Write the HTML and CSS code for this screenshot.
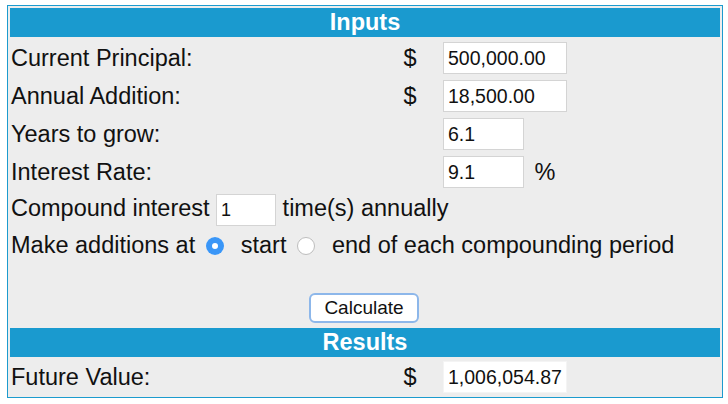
FILE: index.html
```html
<!DOCTYPE html>
<html lang="en">
<head>
    <meta charset="UTF-8">
    <meta name="viewport" content="width=device-width, initial-scale=1.0">
    <title>Compound Interest Calculator</title>
    <link rel="stylesheet" href="styles.css">
</head>
<body>
    <form class="calc">
        <table class="calc-table">
            <colgroup>
                <col class="col-label">
                <col class="col-sign">
                <col class="col-field">
            </colgroup>
            <tr>
                <th colspan="3" class="section-head">Inputs</th>
            </tr>
            <tr>
                <td class="first">Current Principal:</td>
                <td class="sign first">$</td>
                <td class="field first"><input type="text" class="wide" value="500,000.00"></td>
            </tr>
            <tr>
                <td>Annual Addition:</td>
                <td class="sign">$</td>
                <td class="field"><input type="text" class="wide" value="18,500.00"></td>
            </tr>
            <tr>
                <td>Years to grow:</td>
                <td class="sign"></td>
                <td class="field"><input type="text" class="short" value="6.1"></td>
            </tr>
            <tr>
                <td>Interest Rate:</td>
                <td class="sign"></td>
                <td class="field"><input type="text" class="short" value="9.1"> <span class="pct">%</span></td>
            </tr>
            <tr>
                <td colspan="3">Compound interest <input type="text" class="tiny" value="1"> time(s) annually</td>
            </tr>
            <tr>
                <td colspan="3" class="radio-row">Make additions at <input type="radio" name="when" class="radio" checked>start <input type="radio" name="when" class="radio">end of each compounding period</td>
            </tr>
            <tr>
                <td colspan="3" class="submit-row"><button type="button" class="calc-btn">Calculate</button></td>
            </tr>
            <tr>
                <th colspan="3" class="section-head">Results</th>
            </tr>
            <tr>
                <td>Future Value:</td>
                <td class="sign">$</td>
                <td class="field"><input type="text" class="wide result" value="1,006,054.87" readonly></td>
            </tr>
        </table>
    </form>
</body>
</html>
```

FILE: styles.css
```css
body {
    margin: 0;
    background-color: #fff;
    font-family: "Liberation Sans", Arial, sans-serif;
    color: #111;
}
.calc {
    padding: 5px 0 0 7px;
}
.calc-table {
    width: 716px;
    table-layout: fixed;
    border: 1px solid #1c9bce;
    border-spacing: 2px;
    background-color: #ededed;
    font-size: 23.5px;
}
.col-label {
    width: 369px;
}
.col-sign {
    width: 58px;
}
.calc-table td {
    padding: 2px 1px;
    white-space: nowrap;
}
.calc-table td.first {
    padding-top: 3px;
}
.section-head {
    height: 29px;
    padding: 0;
    background-color: #1a9acf;
    color: #fff;
    font-weight: bold;
    text-align: center;
    line-height: 29px;
}
.sign {
    text-align: center;
}
.calc-table td.field {
    padding-left: 2px;
}
input[type="text"] {
    height: 32px;
    box-sizing: border-box;
    padding: 0 0 0 4px;
    border: 1px solid #d4d4d4;
    background-color: #fff;
    font-family: "Liberation Sans", Arial, sans-serif;
    font-size: 19.5px;
    color: #111;
    vertical-align: middle;
    margin: 0;
}
.wide {
    width: 124px;
}
.short {
    width: 81px;
}
input[type="text"].tiny {
    width: 60px;
    font-size: 18px;
}
input[type="text"].result {
    border-color: #f4f4f4;
}
.pct {
    margin-left: 4px;
    vertical-align: middle;
}
input[type="radio"].radio {
    appearance: none;
    -webkit-appearance: none;
    display: inline-block;
    box-sizing: border-box;
    width: 18px;
    height: 18px;
    margin: 0 17px 0 4px;
    padding: 0;
    border-radius: 50%;
    border: 1px solid #bdbdbd;
    background-color: #fff;
    vertical-align: -2px;
}
input[type="radio"].radio:checked {
    border: none;
    box-shadow: inset 0 0 0 6px #3a96f7;
}
.calc-table td.submit-row {
    padding: 30px 0 3px;
    text-align: center;
}
.calc-btn {
    width: 110px;
    height: 30px;
    background-color: #fff;
    border: 2px solid #8db7ea;
    border-radius: 6px;
    font-family: "Liberation Sans", Arial, sans-serif;
    font-size: 19px;
    color: #111;
    margin-left: -2px;
}
```
